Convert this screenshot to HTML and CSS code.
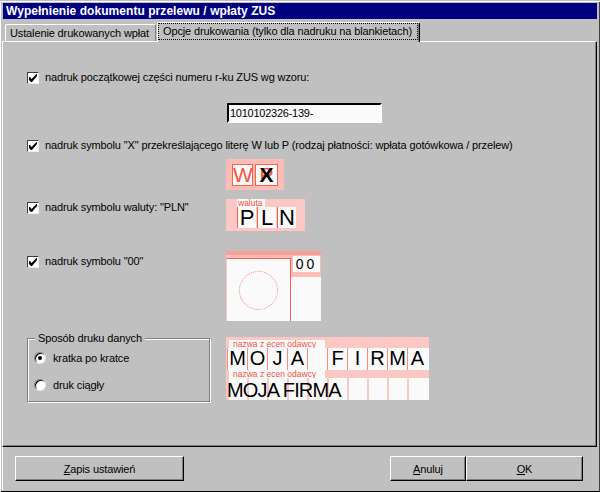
FILE: index.html
```html
<!DOCTYPE html>
<html lang="pl">

<head>
    <meta charset="UTF-8">
    <title>Wypełnienie dokumentu przelewu / wpłaty ZUS</title>
    <link rel="stylesheet" href="styles.css">
</head>

<body>
    <svg class="defs" width="0" height="0">
        <symbol id="tick" viewBox="0 0 8 8">
            <path d="M0 3v3l2 2h1l5-6V0h-.5L2.500 5 1 3z" fill="#000"/>
        </symbol>
    </svg>

    <div class="window">
        <div class="title-bar">Wypełnienie dokumentu przelewu / wpłaty ZUS</div>

        <div class="tabs">
            <div class="tab">Ustalenie drukowanych wpłat</div>
            <div class="tab active"><span class="focus">Opcje drukowania (tylko dla nadruku na blankietach)</span></div>
        </div>

        <div class="page">
            <!-- Numer r-ku -->
            <div class="option row-account">
                <span class="check"><svg><use href="#tick"/></svg></span>
                <span class="opt-label">nadruk początkowej części numeru r-ku ZUS wg wzoru:</span>
            </div>
            <div class="account-input">1010102326-139-</div>

            <!-- Symbol X -->
            <div class="option row-x">
                <span class="check"><svg><use href="#tick"/></svg></span>
                <span class="opt-label">nadruk symbolu "X" przekreślającego literę W lub P (rodzaj płatności: wpłata gotówkowa / przelew)</span>
            </div>
            <div class="sample sample-wx">
                <span class="wx-box">W</span>
                <span class="wx-box wide">P<span class="wx-cross">X</span></span>
            </div>

            <!-- Waluta -->
            <div class="side-row row-pln">
                <div class="option side-option">
                    <span class="check"><svg><use href="#tick"/></svg></span>
                    <span class="opt-label">nadruk symbolu waluty: "PLN"</span>
                </div>
                <div class="sample sample-pln">
                    <span class="mini-label">waluta</span>
                    <div class="pln-boxes">
                        <span>P</span><span>L</span><span>N</span>
                    </div>
                </div>
            </div>

            <!-- Symbol 00 -->
            <div class="side-row row-00">
                <div class="option side-option">
                    <span class="check"><svg><use href="#tick"/></svg></span>
                    <span class="opt-label">nadruk symbolu "00"</span>
                </div>
                <div class="sample sample-00">
                    <div class="stamp-area"><span class="stamp"></span></div>
                    <div class="zero-area"><span class="zero-box">00</span></div>
                </div>
            </div>

            <!-- Sposob druku -->
            <div class="side-row row-mode">
                <fieldset class="group">
                    <legend>Sposób druku danych</legend>
                    <div class="radio-row">
                        <span class="radio selected"></span>
                        <span>kratka po kratce</span>
                    </div>
                    <div class="radio-row">
                        <span class="radio"></span>
                        <span>druk ciągły</span>
                    </div>
                </fieldset>

                <div class="sample sample-name">
                    <div class="name-strip"><span class="mini-label">nazwa z ecen odawcy</span></div>
                    <div class="cells">
                        <span>M</span><span>O</span><span>J</span><span>A</span><span></span>
                        <span>F</span><span>I</span><span>R</span><span>M</span><span>A</span>
                    </div>
                    <div class="name-strip"><span class="mini-label">nazwa z ecen odawcy</span></div>
                    <div class="cells continuous">
                        <span></span><span></span><span></span><span></span><span></span>
                        <span></span><span></span><span></span><span></span><span></span>
                        <div class="continuous-text">MOJA FIRMA</div>
                    </div>
                </div>
            </div>
        </div>

        <div class="footer">
            <button class="btn btn-save"><u>Z</u>apis ustawień</button>
            <div class="footer-right">
                <button class="btn btn-cancel"><u>A</u>nuluj</button>
                <button class="btn btn-ok"><u>O</u>K</button>
            </div>
        </div>
    </div>
</body>

</html>
```

FILE: styles.css
```css
/* General styles */
body {
    margin: 0;
    padding: 0;
    background: #c0c0c0;
    font-family: "Liberation Sans", Arial, sans-serif;
    font-size: 11px;
    letter-spacing: -0.13px;
    color: #000;
}

.defs {
    position: absolute;
}

.window {
    width: 600px;
    height: 492px;
    box-sizing: border-box;
    padding: 3px 3px 2px 2px;
    background: #c0c0c0;
    border-top: 1px solid #c0c0c0;
    box-shadow: inset 0 1px 0 #fff, inset 1px 0 0 #fff, inset -1px 0 0 #404040, inset 0 -1px 0 #000;
    display: flex;
    flex-direction: column;
    overflow: hidden;
}

.title-bar {
    height: 16px;
    margin-top: -1px;
    margin-left: 1px;
    padding-left: 3px;
    background: #000080;
    color: #fff;
    font-size: 12px;
    font-weight: bold;
    line-height: 16px;
    letter-spacing: 0.05px;
    white-space: nowrap;
}

/* Tabs */
.tabs {
    display: flex;
    align-items: flex-end;
    height: 22px;
    padding-left: 3px;
}

.tab {
    height: 17px;
    width: 151px;
    box-sizing: border-box;
    padding-left: 4px;
    line-height: 17px;
    background: #c0c0c0;
    border-top: 1px solid #fff;
    border-left: 1px solid #fff;
    border-right: 1px solid #808080;
    border-radius: 2px 2px 0 0;
    white-space: nowrap;
}

.tab.active {
    position: relative;
    z-index: 1;
    height: 20px;
    width: 263px;
    margin-left: 1px;
    margin-bottom: -1px;
    padding: 1px 2px 1px 1px;
    line-height: 15px;
    border-right: 1px solid #000;
    box-shadow: inset -1px 0 0 #808080;
}

.focus {
    display: block;
    height: 15px;
    padding-left: 4px;
    outline: 1px dotted #000;
    outline-offset: 0;
}

.page {
    height: 406px;
    box-sizing: border-box;
    padding: 28px 0 0 24px;
    border-top: 1px solid #fff;
    border-left: 1px solid #fff;
    border-right: 1px solid #000;
    border-bottom: 1px solid #000;
    box-shadow: inset -1px -1px 0 #808080;
}

/* Check options */
.option {
    display: flex;
    align-items: center;
    gap: 6px;
    height: 15px;
    white-space: nowrap;
}

.opt-label {
    margin-bottom: 2px;
}

.check {
    display: block;
    width: 12px;
    height: 12px;
    box-sizing: border-box;
    flex: none;
    padding: 1px;
    background: #fff;
    border-top: 1px solid #404040;
    border-left: 1px solid #404040;
    border-right: 1px solid #eee;
    border-bottom: 1px solid #eee;
}

.check svg {
    display: block;
    width: 8px;
    height: 8px;
}

.account-input {
    width: 155px;
    height: 20px;
    box-sizing: border-box;
    margin: 18px 0 0 200px;
    padding: 2px 0 0 1px;
    background: #fafafa;
    border-top: 2px solid #000;
    border-left: 2px solid #000;
    border-right: 2px solid #fff;
    border-bottom: 2px solid #fff;
    line-height: 13px;
    letter-spacing: -0.25px;
}

.row-x {
    margin-top: 15px;
}

.side-row {
    display: flex;
    align-items: flex-start;
}

.side-option {
    width: 199px;
    flex: none;
}

/* Sample prints */
.sample {
    position: relative;
    background: #fcc8c4;
}

.sample-wx {
    display: flex;
    gap: 2px;
    width: 58px;
    height: 31px;
    box-sizing: border-box;
    margin: 6px 0 0 199px;
    padding: 5px 0 0 6px;
    background: #fdbdb6;
}

.wx-box {
    position: relative;
    width: 21px;
    height: 22px;
    box-sizing: border-box;
    background: #fafafa;
    border: 1px solid #f86050;
    color: #f85040;
    font-size: 21px;
    letter-spacing: 0;
    line-height: 20px;
    text-align: center;
}

.wx-box.wide {
    width: 23px;
}

.wx-cross {
    position: absolute;
    left: 0;
    top: 0;
    width: 100%;
    color: #000;
    font-weight: bold;
}

.row-pln {
    margin-top: 9px;
}

.row-pln .side-option {
    margin-top: 1px;
}

.sample-pln {
    width: 79px;
    height: 32px;
    box-sizing: border-box;
    padding: 8px 0 0 11px;
}

.mini-label {
    position: absolute;
    background: #fafafa;
    color: #f85040;
    font-size: 8.5px;
    letter-spacing: 0;
    line-height: 8px;
    white-space: nowrap;
}

.sample-pln .mini-label {
    left: 11px;
    top: 0;
    width: 28px;
    padding-left: 1px;
    box-sizing: border-box;
}

.pln-boxes {
    display: flex;
    gap: 1px;
}

.pln-boxes span {
    width: 19px;
    height: 21px;
    box-sizing: border-box;
    background: #fafafa;
    border-left: 1px solid #f86050;
    font-size: 22px;
    letter-spacing: 0;
    line-height: 21px;
    text-align: center;
}

.row-00 {
    margin-top: 20px;
}

.row-00 .side-option {
    margin-top: 3px;
}

.sample-00 {
    display: flex;
    width: 95px;
    height: 70px;
    background: #fafafa;
    border-top: 4px solid #fa9f95;
    box-sizing: border-box;
    padding-top: 3px;
    box-shadow: inset 0 3px 0 #fdbdb6;
}

.stamp-area {
    display: flex;
    align-items: center;
    justify-content: center;
    width: 65px;
    height: 63px;
    box-sizing: border-box;
    border-top: 1px solid #f86050;
    border-left: 1px solid #fcc8c4;
    border-right: 1px solid #f86050;
}

.stamp {
    display: block;
    width: 39px;
    height: 39px;
    box-sizing: border-box;
    border: 1px dotted #f88a80;
    border-radius: 50%;
}

.zero-area {
    width: 30px;
    height: 22px;
    margin-top: -3px;
    padding: 1px 1px 0 2px;
    background: #fdbdb6;
    box-sizing: border-box;
}

.zero-box {
    display: block;
    height: 16px;
    background: #fafafa;
    font-size: 14px;
    line-height: 16px;
    text-align: center;
    letter-spacing: 3px;
}

.row-mode {
    margin-top: 16px;
}

/* Group box */
.group {
    width: 183px;
    height: 70px;
    box-sizing: border-box;
    margin: -5px 16px 0 0;
    padding: 7px 0 0 6px;
    border: 1px solid #808080;
    box-shadow: 1px 1px 0 #fff, inset 1px 1px 0 #fff;
    flex: none;
}

.group legend {
    margin-left: 1px;
    padding: 0 3px;
    line-height: 12px;
    background: #c0c0c0;
}

.radio-row {
    display: flex;
    align-items: center;
    gap: 7px;
    height: 13px;
    margin-bottom: 14px;
}

.radio {
    position: relative;
    display: block;
    width: 12px;
    height: 12px;
    box-sizing: border-box;
    flex: none;
    background: #fff;
    border: 1px solid #808080;
    border-right-color: #e8e8e8;
    border-bottom-color: #e8e8e8;
    border-radius: 50%;
    box-shadow: inset 1px 1px 0 #000;
}

.radio.selected::after {
    content: "";
    position: absolute;
    left: 3px;
    top: 3px;
    width: 4px;
    height: 4px;
    border-radius: 50%;
    background: #000;
}

.sample-name {
    width: 203px;
    height: 63px;
}

.name-strip {
    position: relative;
    height: 11px;
}

.name-strip + .cells + .name-strip {
    height: 8px;
}

.sample-name .mini-label {
    left: 3px;
    top: 3px;
    width: 96px;
    padding-left: 4px;
    box-sizing: border-box;
}

.name-strip + .cells + .name-strip .mini-label {
    top: 0;
}

.cells {
    position: relative;
    display: flex;
    height: 22px;
    margin-left: 1px;
    background: #fafafa;
}

.cells span {
    width: 20px;
    box-sizing: border-box;
    border-left: 1px solid #fc8a80;
    font-size: 20px;
    letter-spacing: 0;
    line-height: 20px;
    text-align: center;
}

.cells.continuous span {
    border-left: 2px solid #fcc8c4;
}

.continuous-text {
    position: absolute;
    left: 0;
    top: 1px;
    font-size: 20px;
    letter-spacing: -0.85px;
    line-height: 22px;
    white-space: nowrap;
}

/* Bottom buttons */
.footer {
    flex: 1;
    display: flex;
    justify-content: space-between;
    align-items: flex-start;
    padding: 9px 14px 0 12px;
    border-left: 1px solid #fff;
}

.footer-right {
    display: flex;
}

.btn {
    height: 25px;
    padding: 0;
    background: #c0c0c0;
    border-top: 1px solid #fff;
    border-left: 1px solid #fff;
    border-right: 1px solid #000;
    border-bottom: 1px solid #000;
    box-shadow: inset -1px -1px 0 #808080;
    font-family: "Liberation Sans", Arial, sans-serif;
    font-size: 11px;
    letter-spacing: -0.13px;
    color: #000;
}

.btn-save {
    width: 169px;
}

.btn-cancel {
    width: 76px;
}

.btn-ok {
    width: 117px;
}
```
